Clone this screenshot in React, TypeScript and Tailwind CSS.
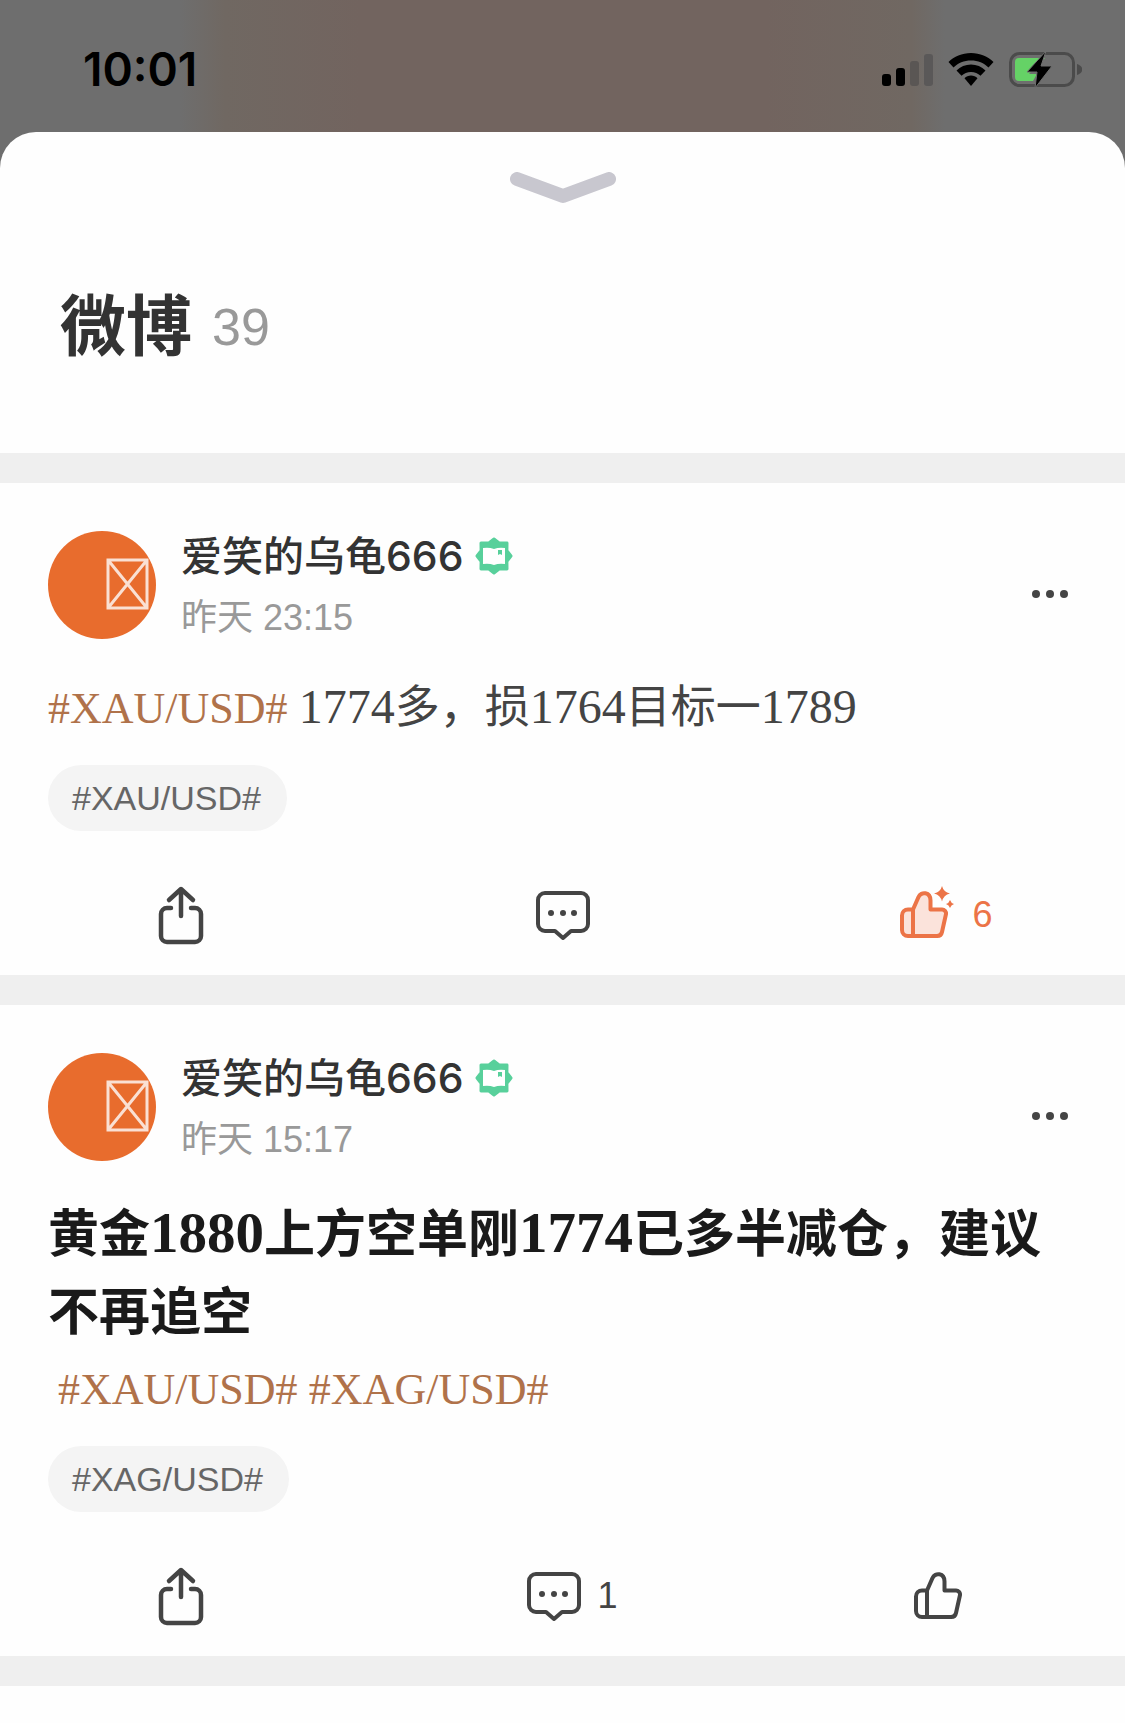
import React from 'react';

interface Post {
  id: number;
  author: string;
  time: string;
  title?: string;
  topics: string[];
  text?: string;
  tag: string;
  comments?: number;
  likes?: number;
}

const posts: Post[] = [
  {
    id: 1,
    author: '爱笑的乌龟666',
    time: '昨天 23:15',
    topics: ['#XAU/USD#'],
    text: '1774多，损1764目标一1789',
    tag: '#XAU/USD#',
    likes: 6,
  },
  {
    id: 2,
    author: '爱笑的乌龟666',
    time: '昨天 15:17',
    title: '黄金1880上方空单刚1774已多半减仓，建议不再追空',
    topics: ['#XAU/USD#', '#XAG/USD#'],
    tag: '#XAG/USD#',
    comments: 1,
  },
];

// Serif digits run small next to the Chinese glyphs, so they get their own size
const MixedText: React.FC<{ text: string; digitClass: string }> = ({ text, digitClass }) => (
  <>
    {text.split(/(\d+)/).map((part, i) =>
      /^\d+$/.test(part) ? (
        <span key={i} className={digitClass}>{part}</span>
      ) : (
        part
      )
    )}
  </>
);

const StatusBar: React.FC = () => (
  <div className="flex h-[132px] items-start justify-between pt-[45px] pl-[83px] pr-[43px]">
    <span className="font-[Inter,sans-serif] text-[46px] leading-[48px] font-semibold text-black">10:01</span>
    <div className="flex items-center gap-[15px] pt-[7px]">
      <svg width="51" height="34" viewBox="0 0 51 34">
        <rect x="0" y="21" width="9" height="12" rx="3" fill="#000" />
        <rect x="14" y="15" width="9" height="18" rx="3" fill="#000" />
        <rect x="28" y="8" width="9" height="25" rx="3" fill="#5a5654" />
        <rect x="42" y="1" width="9" height="32" rx="3" fill="#5a5858" />
      </svg>
      <svg width="46" height="34" viewBox="0 0 46 34">
        <path d="M23 0C14 0 6 3.500 .5 9l5 5.500C10 10 16 7.500 23 7.500S36 10 40.500 14.500l5-5.500C40 3.500 32 0 23 0z" />
        <path d="M23 11.500c-5.500 0-10.700 2.200-14.500 6l5 5.300c2.500-2.400 5.800-3.800 9.500-3.800s7 1.400 9.500 3.800l5-5.300c-3.800-3.800-9-6-14.500-6z" />
        <path d="M23 22.500c-2.500 0-4.800 1-6.500 2.700L23 33l6.500-7.800c-1.700-1.700-4-2.700-6.500-2.700z" />
      </svg>
      <svg width="73" height="36" viewBox="0 0 73 36">
        <rect x="1.500" y="1.500" width="63" height="32" rx="9" fill="none" stroke="#4b4b4b" strokeWidth="3" />
        <path d="M10 6h26L20 22h8l-4 7H10a4 4 0 0 1-4-4V10a4 4 0 0 1 4-4z" fill="#65d266" />
        <path d="M68 12c7 2 7 9 0 11z" fill="#4b4b4b" />
        <path d="M37-1L18 20h10l-2 16L43 14H32l5-15z" fill="#000" stroke="#6e6e6e" strokeWidth="1" />
      </svg>
    </div>
  </div>
);

const ShareIcon = () => (
  <svg width="46" height="60" viewBox="0 0 46 60" fill="none" stroke="#444" strokeWidth="4.500" strokeLinecap="round" strokeLinejoin="round">
    <path d="M23 31V5M11 15L23 4l12 11" />
    <path d="M13 23H9a6 6 0 0 0-6 6v22a6 6 0 0 0 6 6h28a6 6 0 0 0 6-6V29a6 6 0 0 0-6-6h-4" />
  </svg>
);

const CommentIcon = () => (
  <svg width="54" height="50" viewBox="0 0 54 50" fill="none" stroke="#444" strokeWidth="4" strokeLinecap="round" strokeLinejoin="round">
    <path d="M9 3h36a7 7 0 0 1 7 7v24a7 7 0 0 1-7 7H35l-8 7-8-7H9a7 7 0 0 1-7-7V10a7 7 0 0 1 7-7z" />
    <g fill="#444" stroke="none">
      <circle cx="15" cy="23" r="3" />
      <circle cx="27" cy="23" r="3" />
      <circle cx="38" cy="23" r="3" />
    </g>
  </svg>
);

const LikeIcon: React.FC<{ active: boolean }> = ({ active }) => {
  const color = active ? '#ec7447' : '#444';
  return (
    <svg width={active ? 54 : 48} height="58" viewBox={active ? '0 0 54 58' : '0 0 48 58'} fill="none">
      <path
        d="M13 23.500H8a6 6 0 0 0-6 6V44a6 6 0 0 0 6 6h29a5 5 0 0 0 5-4l4-18a4 4 0 0 0-4-4.500H30.500V14.500C30.500 6 21 5 18.500 11z"
        fill={active ? '#fbe3db' : 'none'}
        stroke={color}
        strokeWidth="4"
        strokeLinejoin="round"
      />
      <path d="M13 23v27" stroke={color} strokeWidth="4" />
      {active && (
        <g fill={color}>
          <path d="M42 0q1.500 6 8 7.500-6.500 1.500-8 8-1.500-6.500-8-8Q40.500 6 42 0z" />
          <path d="M50 14q1 3 4 4-3 1-4 4-1-3-4-4 3-1 4-4z" />
        </g>
      )}
    </svg>
  );
};

const Badge = () => (
  <svg width="38" height="38" viewBox="0 0 38 38">
    <path
      d="M19 2l5.400 4.100 7.600-.1-.1 7.600L36 19l-4.100 5.400.1 7.600-7.600-.1L19 36l-5.400-4.100-7.600.1.100-7.600L2 19l4.100-5.400L6 6l7.600.1z"
      fill="#58d09b"
      stroke="#58d09b"
      strokeWidth="3"
      strokeLinejoin="round"
    />
    <path d="M8 11q6-1 11 1 5-2 11-1v16q-6-1-11 1-5-2-11-1z" fill="#fff" />
    <path d="M23 13h4v5l-2-1-2 1z" fill="#58d09b" />
  </svg>
);

const Avatar = () => (
  <div className="flex size-[108px] shrink-0 items-center justify-end rounded-full bg-[#e86c2d] pr-[7px] pb-[2px]">
    <svg width="43" height="52" viewBox="0 0 43 52" fill="none" stroke="#fae0d3" strokeWidth="3">
      <path d="M2 2h39v48H2zM2 2l39 48M41 2L2 50" />
    </svg>
  </div>
);

const PostCard: React.FC<{ post: Post }> = ({ post }) => (
  <article className="px-12 pt-12">
    <header className="flex h-[108px] items-center">
      <Avatar />
      <div className="ml-[25px] flex flex-col gap-[10px] pt-1">
        <div className="flex items-center gap-3">
          <h2 className="font-[Inter,'Noto_Sans_CJK_SC',sans-serif] text-[41px] leading-[52px] font-medium text-[#333]">{post.author}</h2>
          <Badge />
        </div>
        <time className="text-[36px] leading-[52px] text-[#999]">{post.time}</time>
      </div>
      <button aria-label="更多" className="ml-auto h-[90px] self-end px-2">
        <svg width="38" height="10" viewBox="0 0 38 10" fill="#444">
          <circle cx="5" cy="5" r="4" />
          <circle cx="19" cy="5" r="4" />
          <circle cx="33" cy="5" r="4" />
        </svg>
      </button>
    </header>

    <div className="mt-[30px] font-['Liberation_Serif','Noto_Sans_CJK_SC',serif]">
      {post.title && (
        <h3 className="-mb-[2px] pt-[5px] text-[51px] leading-[78px] font-bold text-[#1a1a1a]">
          <MixedText text={post.title} digitClass="text-[57px] leading-none" />
        </h3>
      )}
      <p className={`text-[45px] leading-[78px] text-[#444] ${post.title ? 'pl-[10px]' : ''}`}>
        {post.topics.map((topic) => (
          <React.Fragment key={topic}>
            <a href="#topic" className="text-[44px] leading-none text-[#b0724a]">{topic}</a>{' '}
          </React.Fragment>
        ))}
        {post.text && <MixedText text={post.text} digitClass="text-[48px] leading-none" />}
      </p>
    </div>

    <a
      href="#tag"
      className="mt-[18px] flex h-[66px] w-fit items-center rounded-full bg-[#f4f4f4] pr-[26px] pl-6 text-[34px] text-[#666]"
    >
      {post.tag}
    </a>

    <footer className="-mx-12 mt-6 grid h-[120px] grid-cols-3 text-[36px]">
      <button aria-label="分享" className="flex items-center justify-center pr-[14px]">
        <ShareIcon />
      </button>
      <button aria-label="评论" className={`flex items-center justify-center gap-4 text-[#444] ${post.comments ? 'pl-5' : ''}`}>
        <CommentIcon />
        {post.comments}
      </button>
      <button aria-label="赞" className={`flex items-center justify-center gap-[18px] text-[#ec7447] ${post.likes ? 'pl-[18px]' : ''}`}>
        <LikeIcon active={!!post.likes} />
        {post.likes}
      </button>
    </footer>
  </article>
);

const App: React.FC = () => {
  return (
    <div className="min-h-screen bg-[linear-gradient(90deg,#6e6e6e_16%,#706862_20%,#72645f_32%,#72645f_68%,#706862_81%,#6e6e6e_84%)] font-['Liberation_Sans','Noto_Sans_CJK_SC',sans-serif]">
      <StatusBar />
      <main className="min-h-[calc(100vh-132px)] rounded-t-[36px] bg-[#fefefe]">
        <div className="flex h-[321px] flex-col items-center pt-10">
          <button aria-label="收起">
            <svg width="106" height="32" viewBox="0 0 106 32" fill="none" stroke="#c8c7cf" strokeWidth="14" strokeLinecap="round" strokeLinejoin="round">
              <path d="M7 7l46 17L99 7" />
            </svg>
          </button>
          <div className="mt-[75px] flex w-full items-center gap-5 pl-[60px]">
            <h1 className="text-[66px] leading-[96px] font-bold text-[#333]">微博</h1>
            <span className="text-[52px] text-[#999]">39</span>
          </div>
        </div>
        {posts.map((post) => (
          <section key={post.id} className="border-t-[30px] border-[#efefef]">
            <PostCard post={post} />
          </section>
        ))}
        <div className="h-[30px] bg-[#efefef]" />
      </main>
    </div>
  );
};

export default App;
